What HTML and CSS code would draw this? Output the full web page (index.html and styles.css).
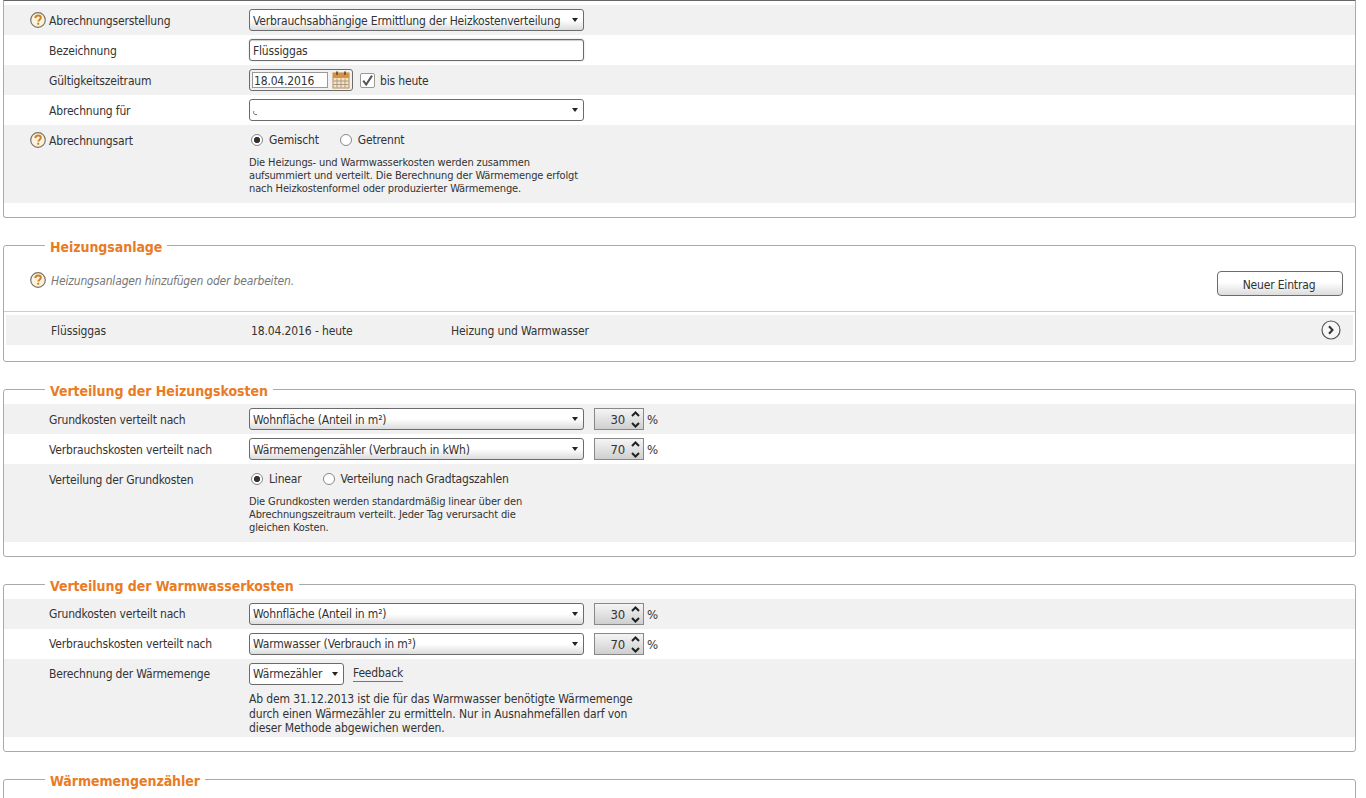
FILE: index.html
```html
<!DOCTYPE html>
<html lang="de">
<head>
<meta charset="utf-8">
<title>Abrechnung</title>
<link rel="stylesheet" href="styles.css">
</head>
<body>
<svg class="defs" width="0" height="0" aria-hidden="true">
  <defs>
    <symbol id="help" viewBox="0 0 16 16">
      <circle cx="8" cy="8" r="7.300" fill="#fbf3e2" stroke="#7a7263" stroke-width="1.200"/>
      <path d="M5.300 6.100C5.400 4.300 6.700 3.500 8.100 3.500c1.600 0 2.700.9 2.700 2.300 0 1-.6 1.500-1.300 2-.8.5-1.100.8-1.100 1.800" fill="none" stroke="#d2811f" stroke-width="2"/>
      <rect x="7.200" y="10.700" width="2" height="2" fill="#d2811f"/>
    </symbol>
    <symbol id="up" viewBox="0 0 9 6">
      <path d="M1 5L4.500 1.500 8 5" fill="none" stroke="#222" stroke-width="2"/>
    </symbol>
    <symbol id="down" viewBox="0 0 9 6">
      <path d="M1 1L4.500 4.500 8 1" fill="none" stroke="#222" stroke-width="2"/>
    </symbol>
  </defs>
</svg>

<div class="panel panel-top">
  <div class="row">
    <div class="label with-help"><svg class="help"><use href="#help"/></svg><span class="label-text">Abrechnungserstellung</span></div>
    <div class="ctrl"><div class="line">
      <span class="sel wide"><select><option>Verbrauchsabhängige Ermittlung der Heizkostenverteilung</option></select></span>
    </div></div>
  </div>
  <div class="row alt">
    <div class="label"><span class="label-text">Bezeichnung</span></div>
    <div class="ctrl"><div class="line"><input class="text" type="text" value="Flüssiggas"></div></div>
  </div>
  <div class="row">
    <div class="label"><span class="label-text">Gültigkeitszeitraum</span></div>
    <div class="ctrl"><div class="line">
      <span class="datebox">
        <input class="date" type="text" value="18.04.2016">
        <svg class="cal" width="18" height="18" viewBox="0 0 18 18">
          <rect x="1" y="2" width="16" height="15" fill="#f6e3c4" stroke="#b98a4d"/>
          <rect x="1" y="2" width="16" height="5" fill="#d9913c"/>
          <rect x="4" y="0.5" width="2" height="3.500" fill="#7d5a2c"/>
          <rect x="12" y="0.5" width="2" height="3.500" fill="#7d5a2c"/>
          <path d="M1.500 10h15M1.500 13.500h15M5 7.500V16.500M9 7.500V16.500M13 7.500V16.500" stroke="#a89a85" stroke-width="1"/>
        </svg>
      </span>
      <span class="check"><svg width="15" height="15" viewBox="0 0 15 15"><path d="M3.200 7.600l3 4L12 2.600" fill="none" stroke="#555" stroke-width="2"/></svg></span>
      <span class="check-label">bis heute</span>
    </div></div>
  </div>
  <div class="row alt">
    <div class="label"><span class="label-text">Abrechnung für</span></div>
    <div class="ctrl"><div class="line">
      <span class="sel wide plain"><select><option></option></select><svg class="smudge" width="8" height="6" viewBox="0 0 8 6"><path d="M2 1C1 3 2 5 5 4.600" fill="none" stroke="#666" stroke-width="1"/></svg></span>
    </div></div>
  </div>
  <div class="row tall">
    <div class="label with-help"><svg class="help"><use href="#help"/></svg><span class="label-text">Abrechnungsart</span></div>
    <div class="ctrl">
      <div class="line radios">
        <span class="radio on"></span><span class="radio-text">Gemischt</span>
        <span class="radio"></span><span class="radio-text">Getrennt</span>
      </div>
      <p class="desc">Die Heizungs- und Warmwasserkosten werden zusammen<br>aufsummiert und verteilt. Die Berechnung der Wärmemenge erfolgt<br>nach Heizkostenformel oder produzierter Wärmemenge.</p>
    </div>
  </div>
</div>

<fieldset class="panel">
  <legend>Heizungsanlage</legend>
  <div class="hint-row">
    <svg class="help"><use href="#help"/></svg>
    <span class="hint">Heizungsanlagen hinzufügen oder bearbeiten.</span>
    <button class="btn" type="button">Neuer Eintrag</button>
  </div>
  <div class="entry">
    <span class="cell">Flüssiggas</span>
    <span class="cell">18.04.2016 - heute</span>
    <span class="cell">Heizung und Warmwasser</span>
    <svg class="go" width="20" height="20" viewBox="0 0 20 20">
      <circle cx="10" cy="10" r="9" fill="#f7f7f7" stroke="#555" stroke-width="1.200"/>
      <path d="M8 6.300L11.500 10 8 13.700" fill="none" stroke="#333" stroke-width="2"/>
    </svg>
  </div>
</fieldset>

<fieldset class="panel">
  <legend>Verteilung der Heizungskosten</legend>
  <div class="rows">
    <div class="row">
      <div class="label"><span class="label-text">Grundkosten verteilt nach</span></div>
      <div class="ctrl"><div class="line">
        <span class="sel wide"><select><option>Wohnfläche (Anteil in m²)</option></select></span>
        <span class="spin"><span class="num">30</span><span class="arrows"><svg class="arrow"><use href="#up"/></svg><svg class="arrow"><use href="#down"/></svg></span></span><span class="pct">%</span>
      </div></div>
    </div>
    <div class="row alt">
      <div class="label"><span class="label-text">Verbrauchskosten verteilt nach</span></div>
      <div class="ctrl"><div class="line">
        <span class="sel wide"><select><option>Wärmemengenzähler (Verbrauch in kWh)</option></select></span>
        <span class="spin"><span class="num">70</span><span class="arrows"><svg class="arrow"><use href="#up"/></svg><svg class="arrow"><use href="#down"/></svg></span></span><span class="pct">%</span>
      </div></div>
    </div>
    <div class="row tall">
      <div class="label"><span class="label-text">Verteilung der Grundkosten</span></div>
      <div class="ctrl">
        <div class="line radios">
          <span class="radio on"></span><span class="radio-text">Linear</span>
          <span class="radio"></span><span class="radio-text">Verteilung nach Gradtagszahlen</span>
        </div>
        <p class="desc">Die Grundkosten werden standardmäßig linear über den<br>Abrechnungszeitraum verteilt. Jeder Tag verursacht die<br>gleichen Kosten.</p>
      </div>
    </div>
  </div>
</fieldset>

<fieldset class="panel">
  <legend>Verteilung der Warmwasserkosten</legend>
  <div class="rows raised">
    <div class="row">
      <div class="label"><span class="label-text">Grundkosten verteilt nach</span></div>
      <div class="ctrl"><div class="line">
        <span class="sel wide"><select><option>Wohnfläche (Anteil in m²)</option></select></span>
        <span class="spin"><span class="num">30</span><span class="arrows"><svg class="arrow"><use href="#up"/></svg><svg class="arrow"><use href="#down"/></svg></span></span><span class="pct">%</span>
      </div></div>
    </div>
    <div class="row alt">
      <div class="label"><span class="label-text">Verbrauchskosten verteilt nach</span></div>
      <div class="ctrl"><div class="line">
        <span class="sel wide"><select><option>Warmwasser (Verbrauch in m³)</option></select></span>
        <span class="spin"><span class="num">70</span><span class="arrows"><svg class="arrow"><use href="#up"/></svg><svg class="arrow"><use href="#down"/></svg></span></span><span class="pct">%</span>
      </div></div>
    </div>
    <div class="row tall">
      <div class="label"><span class="label-text">Berechnung der Wärmemenge</span></div>
      <div class="ctrl">
        <div class="line">
          <span class="sel small plain"><select><option>Wärmezähler</option></select></span>
          <a class="link" href="#">Feedback</a>
        </div>
        <p class="desc large">Ab dem 31.12.2013 ist die für das Warmwasser benötigte Wärmemenge<br>durch einen Wärmezähler zu ermitteln. Nur in Ausnahmefällen darf von<br>dieser Methode abgewichen werden.</p>
      </div>
    </div>
  </div>
</fieldset>

<fieldset class="panel last">
  <legend>Wärmemengenzähler</legend>
</fieldset>
</body>
</html>
```
FILE: styles.css
```css
html {
  overflow: hidden;
  height: 100%;
}

body {
  margin: 0;
  background: #fff;
  color: #333;
  font-family: "DejaVu Sans Condensed", "DejaVu Sans", sans-serif;
  font-stretch: condensed;
  font-size: 12px;
  letter-spacing: -0.17px;
}

.defs {
  display: block;
  height: 0;
}

.panel {
  display: block;
  margin: 0 10px 17px 3px;
  padding: 0 0 14px;
  min-width: 0;
  border: 1px solid #aaa;
  border-radius: 3px;
}

.panel-top {
  padding-top: 4px;
  border-top-color: #666;
  border-radius: 0 0 3px 3px;
}

.panel legend {
  margin-left: 41px;
  padding: 4px 5px 0;
  color: #e97b25;
  font-size: 14px;
  font-weight: bold;
  line-height: 16px;
  letter-spacing: -0.05px;
}

.rows {
  padding-top: 5px;
}

.row {
  display: flex;
  min-height: 30px;
  background: #f1f1f1;
}

.row.alt {
  background: #fff;
}

.row.tall {
  min-height: 78px;
}

.label {
  display: flex;
  align-items: center;
  align-self: flex-start;
  flex: 0 0 245px;
  box-sizing: border-box;
  height: 30px;
  padding-left: 45px;
}

.label-text {
  padding-top: 2px;
}

.raised .label-text {
  padding-top: 0;
}

.label.with-help {
  gap: 3px;
  padding-left: 26px;
}

.help {
  flex: none;
  width: 16px;
  height: 16px;
}

.ctrl {
  flex: 1;
}

.line {
  display: flex;
  align-items: center;
  height: 30px;
}

.sel {
  position: relative;
  display: inline-block;
  height: 22px;
}

.sel.wide {
  width: 335px;
}

.sel.small {
  width: 95px;
}

.sel select {
  display: block;
  box-sizing: border-box;
  width: 100%;
  height: 100%;
  margin: 0;
  padding: 2px 12px 0 3px;
  border: 1px solid #6b6b6b;
  border-radius: 3px;
  appearance: none;
  background: linear-gradient(#fff 0, #fff 50%, #dcdcdc 100%);
  color: #333;
  font: inherit;
  letter-spacing: inherit;
}

.raised .sel select {
  padding-top: 0;
}

.sel.plain select {
  background: #fff;
}

.sel::after {
  content: "";
  position: absolute;
  top: 9px;
  right: 6px;
  border-style: solid;
  border-width: 4px 3.5px 0;
  border-color: #222 transparent transparent;
  pointer-events: none;
}

.smudge {
  position: absolute;
  top: 11px;
  left: 3px;
}

.text {
  box-sizing: border-box;
  width: 335px;
  height: 22px;
  margin: 0;
  padding: 2px 3px 0;
  border: 1px solid #6b6b6b;
  border-radius: 3px;
  box-shadow: inset 0 1px 1px #ccc, 0 0 2px #ccc;
  background: #fff;
  color: #333;
  font: inherit;
  letter-spacing: inherit;
}

.datebox {
  display: flex;
  align-items: center;
  box-sizing: border-box;
  width: 104px;
  height: 22px;
  padding-left: 2px;
  border: 1px solid #6b6b6b;
  border-radius: 3px;
}

.date {
  box-sizing: border-box;
  width: 76px;
  height: 16px;
  margin: 0;
  padding: 2px 1px 0;
  border: 1px solid #999;
  background: #fff;
  color: #333;
  font: inherit;
  letter-spacing: inherit;
}

.cal {
  margin-left: 4px;
}

.check {
  display: flex;
  box-sizing: border-box;
  width: 15px;
  height: 15px;
  margin-left: 7px;
  border: 1px solid #999;
  border-radius: 2px;
  background: #fff;
}

.check svg {
  flex: none;
  margin: -1px;
}

.check-label {
  margin-left: 5px;
  padding-top: 2px;
}

.radios {
  padding-left: 2px;
}

.radio {
  box-sizing: border-box;
  width: 12px;
  height: 12px;
  border: 1px solid #888;
  border-radius: 50%;
  background: #fff;
}

.radio.on {
  background: radial-gradient(circle, #333 0, #333 2.800px, #fff 3.400px);
}

.radio-text {
  margin-left: 6px;
  margin-right: 21px;
}

.desc {
  margin: 1px 0 0;
  font-size: 11px;
  line-height: 13px;
  letter-spacing: -0.125px;
}

.desc.large {
  margin-top: 3px;
  font-size: 12px;
  line-height: 14.500px;
  letter-spacing: -0.11px;
}

.spin {
  display: flex;
  align-items: center;
  box-sizing: border-box;
  width: 50px;
  height: 22px;
  margin-left: 10px;
  border: 1px solid #888;
  background: linear-gradient(#f5f5f5, #cfcfcf);
}

.num {
  flex: 1;
  padding: 0 3px 0 0;
  font-size: 13px;
  text-align: right;
}

.arrows {
  display: flex;
  flex-direction: column;
  align-items: center;
  gap: 5px;
  width: 14px;
  margin-right: 1px;
}

.arrow {
  display: block;
  width: 9px;
  height: 6px;
}

.pct {
  margin-left: 3px;
  font-size: 13px;
}

.link {
  margin-left: 9px;
  padding-bottom: 1px;
  border-bottom: 1px solid #777;
  color: #333;
  text-decoration: none;
}

.hint-row {
  display: flex;
  align-items: flex-start;
  box-sizing: border-box;
  height: 57px;
  padding: 15px 12px 0 26px;
  border-bottom: 1px solid #ccc;
}

.hint-row .help {
  margin-top: 2px;
}

.hint {
  flex: 1;
  margin-left: 5px;
  padding-top: 1px;
  color: #777;
  font-style: italic;
  line-height: 20px;
}

.btn {
  width: 126px;
  height: 25px;
  margin-top: 1px;
  padding: 2px 2px 0 0;
  border: 1px solid #6b6b6b;
  border-radius: 4px;
  background: linear-gradient(#fff 0, #fff 45%, #dcdcdc 100%);
  color: #333;
  font: inherit;
  letter-spacing: inherit;
}

.entry {
  display: flex;
  align-items: center;
  height: 30px;
  margin: 3px 2px 2px;
  padding-left: 45px;
  background: #f1f1f1;
}

.cell {
  flex: 0 0 200px;
  padding-top: 2px;
  letter-spacing: -0.12px;
}

.go {
  margin-left: auto;
  margin-right: 12px;
}

.last {
  min-height: 60px;
}
```
